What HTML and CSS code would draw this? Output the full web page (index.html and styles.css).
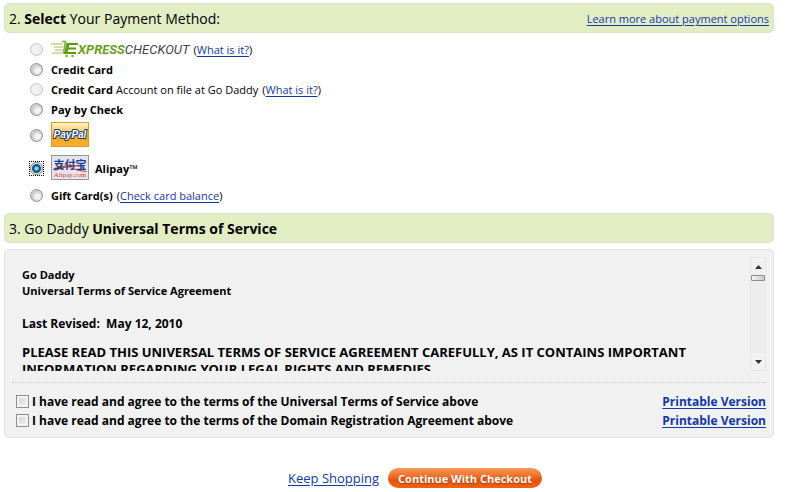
FILE: index.html
```html
<!DOCTYPE html>
<html lang="en">
<head>
    <meta charset="UTF-8">
    <meta name="viewport" content="width=device-width, initial-scale=1.0">
    <title>Checkout</title>
    <link rel="stylesheet" href="styles.css">
</head>
<body>
    <form class="checkout">
        <div class="section-bar">
            <h2>2. <b>Select</b> Your Payment Method:</h2>
            <a href="#" class="bar-link">Learn more about payment options</a>
        </div>

        <div class="methods">
            <div class="method">
                <input type="radio" name="method" id="express" disabled>
                <label for="express" class="express-logo">
                    <svg width="27" height="18" viewBox="0 0 27 18" aria-hidden="true">
                        <g fill="none" stroke="#83b626">
                            <path d="M0 4h11M3 7h9M4 10h8M1 13h12" stroke="#9cc461" stroke-width="1.200"/>
                            <path d="M11 1.500h3.500L12.500 13.500" stroke-width="1.600"/>
                            <path d="M17 3L15 13.500" stroke="#5c9a12" stroke-width="3"/>
                            <path d="M16 4h11M15 8.500h10M13 13h12" stroke="#5c9a12" stroke-width="2.200"/>
                        </g>
                        <circle cx="15.500" cy="16" r="1.300" fill="#83b626"/>
                        <circle cx="21.500" cy="16" r="1.300" fill="#83b626"/>
                    </svg>
                    <span class="express-name"><b>XPRESS</b>CHECKOUT</span>
                </label>
                <span>(<a href="#">What is it?</a>)</span>
            </div>
            <div class="method">
                <input type="radio" name="method" id="credit">
                <label for="credit"><b>Credit Card</b></label>
            </div>
            <div class="method">
                <input type="radio" name="method" id="onfile" disabled>
                <label for="onfile"><b>Credit Card</b> Account on file at Go Daddy</label>
                <span>(<a href="#">What is it?</a>)</span>
            </div>
            <div class="method">
                <input type="radio" name="method" id="check">
                <label for="check"><b>Pay by Check</b></label>
            </div>
            <div class="method method-card">
                <input type="radio" name="method" id="paypal">
                <label for="paypal" class="card paypal">
                    <svg width="36" height="23" viewBox="0 0 36 23">
                        <text x="18" y="15" text-anchor="middle">PayPal</text>
                    </svg>
                </label>
            </div>
            <div class="method method-card">
                <input type="radio" name="method" id="alipay" class="focused" checked>
                <label for="alipay" class="card alipay">
                    <svg width="36" height="23" viewBox="0 0 36 23">
                        <path d="M1 13C6 9 26 8 35 10C26 10 12 11 6 14C3 15 1 14 1 13Z" fill="#e0402e"/>
                        <path d="M15 10Q24 14 35 15L34 16Q22 15 15 10Z" fill="#e0402e"/>
                        <text x="18" y="13" text-anchor="middle" class="alipay-name">支付宝</text>
                        <text x="18" y="21" text-anchor="middle" class="alipay-site">Alipay.com</text>
                    </svg>
                </label>
                <label for="alipay"><b>Alipay™</b></label>
            </div>
            <div class="method">
                <input type="radio" name="method" id="gift">
                <label for="gift"><b>Gift Card(s)</b></label>
                <span>(<a href="#">Check card balance</a>)</span>
            </div>
        </div>

        <div class="section-bar">
            <h2>3. Go Daddy <b>Universal Terms of Service</b></h2>
        </div>

        <div class="terms">
            <div class="terms-scroll">
                <div class="terms-text">
                    <p class="terms-title">Go Daddy<br>Universal Terms of Service Agreement</p>
                    <p>Last Revised:&nbsp; May 12, 2010</p>
                    <p class="notice">PLEASE READ THIS UNIVERSAL TERMS OF SERVICE AGREEMENT CAREFULLY, AS IT CONTAINS IMPORTANT INFORMATION REGARDING YOUR LEGAL RIGHTS AND REMEDIES.</p>
                </div>
                <div class="scrollbar">
                    <button type="button" aria-label="Scroll up"><svg width="7" height="4"><path d="M0 4L3.500 0L7 4Z" fill="#333"/></svg></button>
                    <span class="thumb"></span>
                    <button type="button" class="down" aria-label="Scroll down"><svg width="7" height="4"><path d="M0 0L3.500 4L7 0Z" fill="#333"/></svg></button>
                </div>
            </div>
            <div class="agreements">
                <div class="agree">
                    <input type="checkbox" id="agreeTos">
                    <label for="agreeTos">I have read and agree to the terms of the Universal Terms of Service above</label>
                    <a href="#">Printable Version</a>
                </div>
                <div class="agree">
                    <input type="checkbox" id="agreeDomain">
                    <label for="agreeDomain">I have read and agree to the terms of the Domain Registration Agreement above</label>
                    <a href="#">Printable Version</a>
                </div>
            </div>
        </div>

        <div class="actions">
            <a href="#">Keep Shopping</a>
            <button type="submit" class="continue-btn">Continue With Checkout</button>
        </div>
    </form>
</body>
</html>
```
FILE: styles.css
```css
* {
    margin: 0;
    padding: 0;
    box-sizing: border-box;
}

body {
    background: #fff;
    color: #000;
    font-family: 'Open Sans', 'Noto Sans', sans-serif;
    font-size: 11px;
    padding: 3px 26px 0 4px;
}

a {
    color: #1038ab;
    text-underline-offset: 2px;
}

button {
    border: none;
    cursor: pointer;
}

.section-bar {
    display: flex;
    justify-content: space-between;
    align-items: center;
    height: 30px;
    padding: 0 4px;
    background: #e2edc4;
    border: 1px solid #dde4d0;
    border-radius: 5px;
}

.section-bar h2 {
    font-size: 14px;
    font-weight: 400;
}

/* payment methods */
.methods {
    padding: 6px 0 8px 26px;
}

.method {
    display: flex;
    align-items: center;
    gap: 4px;
    height: 20px;
}

.method-card {
    height: 33px;
}

.method input {
    appearance: none;
    width: 13px;
    height: 13px;
    margin-right: 4px;
    border: 1px solid #8f9093;
    border-radius: 50%;
    background: radial-gradient(circle at 60% 60%, #f5f5f5 20%, #c2c4c6 65%, #f4f4f4 75%);
}

.method input:disabled {
    border-color: #c3c3c3;
    background: #f0f0f0;
}

/* selected dot with the dotted focus box round it */
.method input.focused {
    border: none;
    border-radius: 0;
    outline: 1px dotted #000;
    background: radial-gradient(circle, #8fe0f5 1px, #14557d 3px, #14557d 4px, #dfe6ea 5px, #8f9093 6px, #fff 7px);
}

.express-logo {
    display: flex;
    align-items: center;
}

.express-name {
    font-family: Roboto, 'Liberation Sans', sans-serif;
    font-size: 13px;
    font-style: italic;
    color: #444;
}

.express-name b {
    color: #6a9f1c;
}

.card {
    width: 38px;
    height: 25px;
    margin: 0 2px 2px 0;
    border: 1px solid #999;
}

.card svg {
    display: block;
}

.paypal {
    border-color: #e19a28;
    background: linear-gradient(#fff3c9, #fcc75a 45%, #fba61f 55%, #fdb02c);
}

.paypal text {
    font: italic bold 10px 'Liberation Sans', sans-serif;
    fill: #fff;
    stroke: #173a6b;
    stroke-width: 2px;
    paint-order: stroke;
}

.alipay {
    background: #e3e5ec;
}

.alipay-name {
    font: bold 11px 'Noto Sans CJK SC', sans-serif;
    fill: #1c3f94;
}

.alipay-site {
    font: 7px 'Liberation Serif', serif;
    fill: #e0402e;
}

/* terms of service */
.terms {
    margin-top: 6px;
    padding: 7px;
    background: #f1f1f1;
    border: 1px solid #e2e2e4;
    border-radius: 5px;
    font-size: 12px;
    font-weight: 700;
}

.terms-scroll {
    display: flex;
    height: 114px;
}

.terms-text {
    flex: 1;
    padding: 10px 50px 0 10px;
    overflow: hidden;
    line-height: 17px;
}

.terms-text p {
    margin-bottom: 12px;
}

.terms-text .terms-title {
    margin-bottom: 16px;
    font-size: 11px;
    line-height: 16px;
}

.terms-text .notice {
    font-size: 13px;
}

.scrollbar {
    display: flex;
    flex-direction: column;
    width: 16px;
    background: #ededed;
    border: 1px solid #e6e6e6;
}

.scrollbar button {
    display: flex;
    align-items: center;
    justify-content: center;
    height: 17px;
    background: #f1f1f1;
}

.scrollbar .down {
    margin-top: auto;
}

.thumb {
    height: 6px;
    border: 1px solid #8d8d8d;
    border-radius: 1px;
    background: linear-gradient(to right, #f4f4f4, #c9c9c9);
}

.agreements {
    margin-top: 11px;
    padding-top: 9px;
    border-top: 1px dotted #c8c8c8;
}

.agree {
    display: flex;
    align-items: center;
    height: 19px;
    padding-left: 4px;
}

.agree input {
    appearance: none;
    width: 13px;
    height: 13px;
    margin-right: 3px;
    border: 1px solid #8e8f8f;
    background: linear-gradient(135deg, #cdd0d4, #f6f6f6);
    box-shadow: inset 0 0 0 2px #f4f4f4;
}

.agree a {
    margin-left: auto;
}

/* bottom buttons */
.actions {
    display: flex;
    justify-content: center;
    align-items: center;
    gap: 9px;
    margin-top: 30px;
    padding-left: 52px;
    font-size: 13px;
}

.continue-btn {
    height: 20px;
    padding: 0 10px;
    border-radius: 10px;
    background: linear-gradient(#f59a5c, #ee6a20 45%, #e8500a 60%, #ee6314);
    color: #fff;
    font: bold 11px 'Open Sans', sans-serif;
    text-shadow: 0 1px 1px #b03c00;
}
```
